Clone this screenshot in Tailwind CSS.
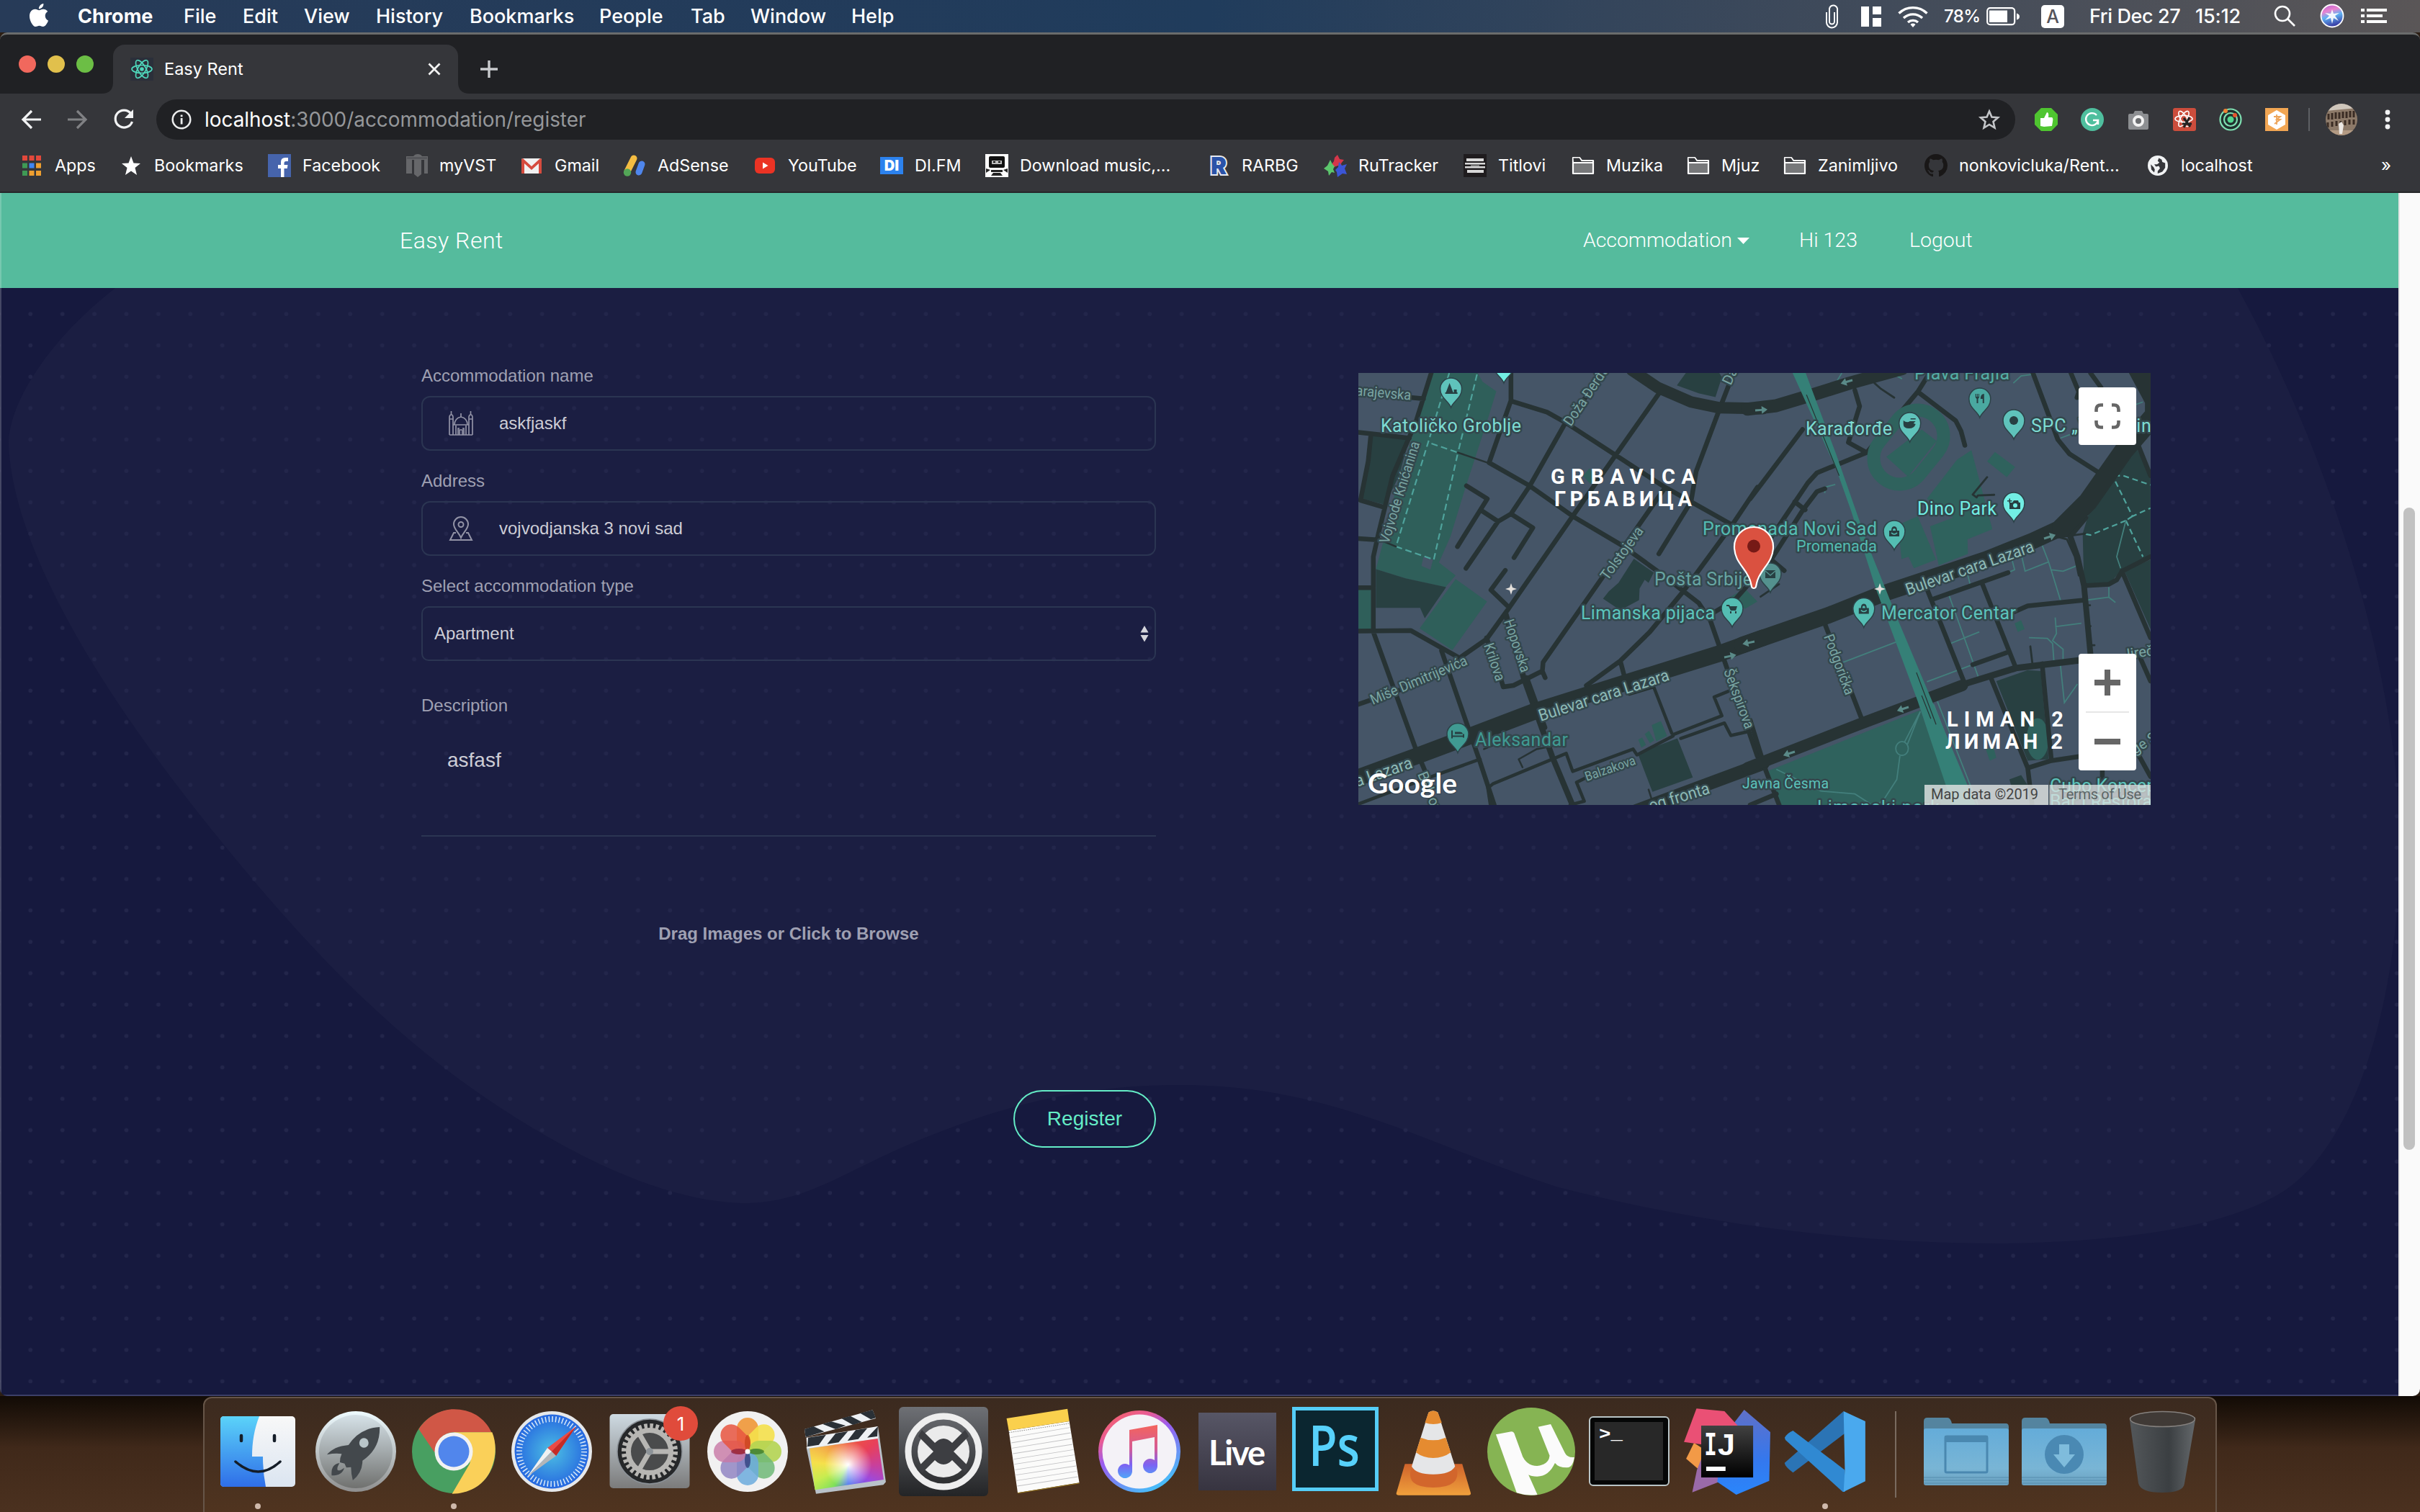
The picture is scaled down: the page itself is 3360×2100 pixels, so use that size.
<!DOCTYPE html>
<html lang="en">
<head>
<meta charset="utf-8">
<title>Easy Rent</title>
<script src="https://cdn.jsdelivr.net/npm/@tailwindcss/browser@4"></script>
</head>
<body class="w-[3360px] h-[2100px] overflow-hidden bg-[#2b1d13] font-[Inter,sans-serif] text-white">
<svg class="absolute w-0 h-0" aria-hidden="true">
  <defs>
    <symbol id="react" viewBox="0 0 32 32"><g fill="none" stroke="#4fd6bb" stroke-width="1.7"><ellipse cx="16" cy="16" rx="14" ry="5.5"/><ellipse cx="16" cy="16" rx="14" ry="5.5" transform="rotate(60 16 16)"/><ellipse cx="16" cy="16" rx="14" ry="5.5" transform="rotate(120 16 16)"/></g><circle cx="16" cy="16" r="2.8" fill="#4fd6bb"/></symbol>
    <symbol id="folder" viewBox="0 0 32 32"><path d="M2 5h9l3 4h16v18H2z" fill="#77787a" stroke="#fff" stroke-width="2.2" stroke-linejoin="round"/><path d="M2.5 5.500h8.200l3 4.500H29v2H3z" fill="#35363a"/><path d="M2 12h28" stroke="#fff" stroke-width="1.800"/></symbol>
    <pattern id="dots" x="20.300" y="414" width="44.400" height="43.600" patternUnits="userSpaceOnUse"><circle cx="22" cy="22" r="2.800" fill="#23264b"/></pattern>
  </defs>
</svg>
<div class="flex h-[2100px] w-[3360px] flex-col">

<!-- menu bar -->
<div class="flex h-[45px] shrink-0 items-center bg-linear-to-r from-[#273b58] via-[#203c5c] to-[#5a5657] text-[27px] font-medium leading-[42px]">
  <div class="flex w-[108px] justify-center"><svg class="h-[32px] w-[32px] -mt-[4px]" viewBox="0 0 24 24" fill="#fff"><path d="M12.152 6.896c-.948 0-2.415-1.078-3.960-1.040-2.040.027-3.910 1.183-4.961 3.014-2.117 3.675-.546 9.103 1.519 12.090 1.013 1.454 2.208 3.090 3.792 3.039 1.520-.065 2.090-.987 3.935-.987 1.831 0 2.350.987 3.960.948 1.637-.026 2.676-1.480 3.676-2.948 1.156-1.688 1.636-3.325 1.662-3.415-.039-.013-3.182-1.221-3.220-4.857-.026-3.040 2.480-4.494 2.597-4.559-1.429-2.090-3.623-2.324-4.390-2.376-2-.156-3.675 1.090-4.610 1.090zM15.530 3.830c.843-1.012 1.400-2.427 1.245-3.830-1.207.052-2.662.805-3.532 1.818-.780.896-1.454 2.338-1.273 3.714 1.338.104 2.715-.688 3.559-1.701"/></svg></div>
  <span class="w-[147px] font-bold">Chrome</span><span class="w-[82px]">File</span><span class="w-[86px]">Edit</span><span class="w-[100px] -ml-[1px]">View</span><span class="w-[130px]">History</span><span class="w-[180px]">Bookmarks</span><span class="w-[127px]">People</span><span class="w-[83px]">Tab</span><span class="w-[140px]">Window</span><span>Help</span>
  <div class="ml-auto flex w-[834px] items-center">
    <svg class="ml-[4px] h-[36px] w-[28px]" viewBox="0 0 28 36" fill="none" stroke="#fff" stroke-width="2"><path d="M6 12v14a7 7 0 0 0 15 0V9a5 5 0 0 0-11-2v18a3.500 3.500 0 0 0 7 0V12"/></svg>
    <svg class="ml-[26px] h-[30px] w-[28px]" viewBox="0 0 28 30" fill="#fff"><path d="M0 1h11v28H0zM16 1h12v11H16zM16 17h12v12H16z"/></svg>
    <svg class="ml-[23px] h-[32px] w-[42px]" viewBox="0 0 42 32" fill="none" stroke="#fff" stroke-width="3.400"><path d="M1.500 11.500a28 28 0 0 1 39 0M8 18a19 19 0 0 1 26 0M14 24a10.500 10.500 0 0 1 14 0"/><path d="M21 31l-3.500-4a5 5 0 0 1 7 0z" fill="#fff" stroke="none"/></svg>
    <span class="ml-[22px] w-[59px] text-[24px] tracking-tight">78%</span>
    <svg class="h-[26px] w-[47px]" viewBox="0 0 47 26"><rect x="1.200" y="1.200" width="38" height="23" rx="4" fill="none" stroke="#fff" stroke-width="2.200"/><rect x="4" y="4.500" width="25" height="16.500" fill="#fff"/><path d="M42 8.500q4 1 4 4.500t-4 4.500z" fill="#fff"/></svg>
    <span class="ml-[29px] flex h-[32px] w-[32px] items-center justify-center rounded-[5px] bg-white text-[25px] text-[#55545b]">A</span>
    <span class="ml-[35px] w-[147px] tracking-[-0.4px] whitespace-nowrap">Fri Dec 27</span><span class="tracking-[-0.2px]">15:12</span>
    <svg class="absolute left-[3156px] top-[6px] h-[32px] w-[32px]" viewBox="0 0 32 32" fill="none" stroke="#fff" stroke-width="2.600"><circle cx="13" cy="13" r="10"/><path d="M20.500 20.500L30 30"/></svg>
    <svg class="absolute left-[3221px] top-[5px] h-[34px] w-[34px]" viewBox="0 0 34 34"><defs><linearGradient id="siri" x1="0" y1="0" x2=".3" y2="1"><stop offset="0" stop-color="#b25ad0"/><stop offset=".35" stop-color="#e983d0"/><stop offset=".6" stop-color="#5fb2f3"/><stop offset="1" stop-color="#3b42a8"/></linearGradient></defs><circle cx="17" cy="17" r="15.500" fill="url(#siri)" stroke="#fff" stroke-width="1.800"/><path d="M17 8l2 6 8-1-6 4 5 7-7-4-2 8-2-8-8 3 6-6-6-4 8 1z" fill="#fff" opacity=".9"/></svg>
    <svg class="absolute left-[3278px] top-[11px] h-[22px] w-[36px]" viewBox="0 0 36 22" fill="#fff"><path d="M0 1h5v4H0zM0 9h5v4H0zM0 17h5v4H0zM8 1h28v4H8zM8 9h22v4H8zM8 17h28v4H8z"/></svg>
  </div>
</div>

<!-- browser window -->
<div class="relative flex h-[1894px] shrink-0 flex-col overflow-hidden rounded-[10px] border-t-[3px] border-[#6a6c6c] bg-[#202124]">
  <div class="flex h-[82px] shrink-0 items-end">
    <div class="mb-[29px] ml-[26px] flex gap-4"><i class="h-6 w-6 rounded-full bg-[#f1685d]"></i><i class="h-6 w-6 rounded-full bg-[#e1c04c]"></i><i class="h-6 w-6 rounded-full bg-[#6cbe45]"></i></div>
    <svg class="ml-[11px] h-[16px] w-[16px]" viewBox="0 0 16 16"><path d="M16 0v16H0Q16 16 16 0" fill="#35363a"/></svg>
    <div class="flex h-[68px] w-[479px] items-center rounded-t-[16px] bg-[#35363a] px-[24px]">
      <svg class="h-8 w-8 bg-[#2b2f3a]"><use href="#react"/></svg>
      <span class="ml-[15px] text-[23.5px] leading-[32px]">Easy Rent</span>
      <svg class="ml-auto h-[18px] w-[18px]" viewBox="0 0 18 18" stroke="#f2f2f2" stroke-width="2.800"><path d="M1.500 1.500l15 15M16.500 1.500l-15 15"/></svg>
    </div>
    <svg class="h-[16px] w-[16px]" viewBox="0 0 16 16"><path d="M0 0v16h16Q0 16 0 0" fill="#35363a"/></svg>
    <svg class="mb-[22px] ml-[15px] h-[24px] w-[24px]" viewBox="0 0 24 24" stroke="#c9cbce" stroke-width="3.400"><path d="M12 0v24M0 12h24"/></svg>
  </div>
  <!-- toolbar -->
  <div class="flex h-[72px] shrink-0 items-center bg-[#35363a]">
    <svg class="ml-[27px] h-[32px] w-[32px]" viewBox="0 0 32 32" fill="none" stroke="#f2f3f4" stroke-width="3.200"><path d="M30 16H5M17 4L5 16l12 12"/></svg>
    <svg class="ml-[33px] h-[32px] w-[32px]" viewBox="0 0 32 32" fill="none" stroke="#808184" stroke-width="3.200"><path d="M2 16h25M15 4l12 12-12 12"/></svg>
    <svg class="ml-[32px] h-[32px] w-[32px]" viewBox="0 0 32 32"><path d="M25.500 7.500A12 12 0 1 0 27.500 19" fill="none" stroke="#f2f3f4" stroke-width="3.200"/><path d="M29 2v12H17z" fill="#f2f3f4"/></svg>
    <div class="ml-[29px] flex h-[56px] w-[2581px] items-center rounded-full bg-[#202124]">
      <svg class="ml-[20px] h-[30px] w-[30px]" viewBox="0 0 30 30"><circle cx="15" cy="15" r="12.300" fill="none" stroke="#eceded" stroke-width="2.500"/><path d="M13.700 13h2.800v8.500h-2.800zM13.700 8.500h2.800v2.800h-2.800z" fill="#eceded"/></svg>
      <span class="ml-[17px] text-[27.9px] leading-[40px] text-white">localhost<span class="text-[#95979a]">:3000/accommodation/register</span></span>
      <svg class="ml-auto mr-[20px] h-[32px] w-[32px]" viewBox="0 0 32 32" fill="none" stroke="#c4c6c9" stroke-width="2.600"><path d="M16 4.500l3.400 8 8.600.8-6.500 5.700 2 8.500L16 23l-7.500 4.500 2-8.500L4 13.300l8.600-.8z"/></svg>
    </div>
    <svg class="ml-[27px] h-[32px] w-[32px]" viewBox="0 0 32 32"><path d="M9 0h14l9 9v14l-9 9H9l-9-9V9z" fill="#4fc530"/><path d="M8 14h5l4-8q3 0 2 7h5q2 1 1 6l-1 6-11 1-5-1z" fill="#fff"/></svg>
    <svg class="ml-[32px] h-[32px] w-[32px]" viewBox="0 0 32 32" fill="none" stroke="#fff" stroke-width="2.400"><circle cx="16" cy="16" r="16" fill="#4fbf9e" stroke="none"/><path d="M22 10a8.500 8.500 0 1 0 2 7h-7M24 17v6"/></svg>
    <svg class="ml-[32px] h-[32px] w-[32px]" viewBox="0 0 32 32"><path d="M11 4h10l2 4h5q2 0 2 2v18q0 2-2 2H4q-2 0-2-2V10q0-2 2-2h5z" fill="#8d8f92"/><circle cx="16" cy="18" r="6" fill="#6b6d70" stroke="#f2f2f2" stroke-width="4"/></svg>
    <svg class="ml-[32px] h-[32px] w-[32px]" viewBox="0 0 32 32" fill="none" stroke="#fff" stroke-width="1.600"><rect width="32" height="32" rx="3" fill="#cc4d3c" stroke="none"/><ellipse cx="15" cy="15" rx="12" ry="4.500"/><ellipse cx="15" cy="15" rx="12" ry="4.500" transform="rotate(60 15 15)"/><ellipse cx="15" cy="15" rx="12" ry="4.500" transform="rotate(120 15 15)"/><path d="M15 14l9 12M23 13l-8 14M13 22h13" stroke="#222" stroke-width="3"/></svg>
    <svg class="ml-[32px] h-[32px] w-[32px]" viewBox="0 0 32 32" fill="none" stroke="#7fe0b2" stroke-width="2.200"><circle cx="16" cy="16" r="14.500" fill="#20302e"/><circle cx="16" cy="16" r="9"/><circle cx="16" cy="16" r="4.500" fill="#52d68f" stroke="none"/><circle cx="9" cy="4" r="3" fill="#ef8233" stroke="none"/><circle cx="22" cy="10" r="3" fill="#e5542d" stroke="none"/></svg>
    <svg class="ml-[32px] h-[32px] w-[32px]" viewBox="0 0 32 32"><path d="M0 0h32v32H0z" fill="#f2a653"/><path d="M16 3l12 7v13l-12 7-12-7V10z" fill="#fff"/><path d="M12 12h9l-5 4h5l-8 6M16 9v14" stroke="#eda55b" stroke-width="1.800" fill="none"/></svg>
    <i class="ml-[28px] h-[32px] w-[2px] bg-[#5e6064]"></i>
    <svg class="ml-[22px] h-[44px] w-[44px] rounded-full" viewBox="0 0 44 44"><path d="M0 0h44v44H0z" fill="#8d7a69"/><path d="M0 0h44v6L0 10z" fill="#cfc6bb"/><path d="M4 14v8M9 13v9M14 12v9M19 12v9M24 11v9M29 11v9M34 10v9M39 10v9M3 26v7M9 25v7M15 24v7M21 24v7M27 23v7M33 22v7M39 22v7" stroke="#3a2c24" stroke-width="3"/><path d="M4 37h36v7H4z" fill="#b39a83"/><path d="M18 28l4-3 3 5-2 12h-4z" fill="#ece8e4"/></svg>
    <svg class="ml-[38px] h-[30px] w-[8px]" viewBox="0 0 8 30" fill="#f2f3f4"><circle cx="4" cy="5" r="3.400"/><circle cx="4" cy="15" r="3.400"/><circle cx="4" cy="25" r="3.400"/></svg>
  </div>
  <!-- bookmarks -->
  <div class="flex h-[66px] shrink-0 items-center border-b-2 border-[#26272a] bg-[#35363a] pb-[8px] pl-[28px] text-[23.3px] leading-[32px] whitespace-nowrap *:flex *:shrink-0 *:items-center">
    <div class="w-[138px] gap-[16px]"><svg class="h-8 w-8" viewBox="0 0 32 32"><path d="M3 2h7v7H3zM12.500 2h7v7h-7zM22 2h7v7h-7z" fill="#e2483b"/><path d="M3 12.500h7v7H3zM3 23h7v7H3z" fill="#3f9a55"/><path d="M12.500 12.500h7v7h-7z" fill="#3f86f5"/><path d="M22 12.500h7v7h-7zM12.500 23h7v7h-7zM22 23h7v7h-7z" fill="#ee9f30"/></svg>Apps</div>
    <div class="w-[206px] gap-[16px]"><svg class="h-8 w-8" viewBox="0 0 32 32" fill="#fff"><path d="M16 3l3.500 9.500L29 13l-7.500 6L24 29l-8-5.500L8 29l2.500-10L3 13l9.500-.5z"/></svg>Bookmarks</div>
    <div class="w-[191px] gap-[16px]"><svg class="h-8 w-8" viewBox="0 0 32 32"><path d="M0 0h32v32H0z" fill="#4664ac"/><path d="M18 32V20h-4v-5h4v-4q0-6 6-6h4v5h-3q-2.500 0-2.500 2.500V15h5l-.7 5h-4.300v12z" fill="#fff"/></svg>Facebook</div>
    <div class="w-[159px] gap-[15px]"><svg class="h-8 w-8" viewBox="0 0 32 32"><path d="M1 3h10q2-3 6-3t6 3h8v24h-5V8h-4v20l-5 4-5-4V8h-3v19H1z" fill="#66676a"/><path d="M2 4h28v3H2z" fill="#55565a"/></svg>myVST</div>
    <div class="w-[143px] gap-[16px]"><svg class="h-8 w-8" viewBox="0 0 32 32"><rect x="2" y="6" width="28" height="21" rx="2" fill="#f1f1f1"/><path d="M2 27V8q0-2 2-2l12 11L28 6q2 0 2 2v19h-4V13l-10 9-10-9v14z" fill="#d64b3e"/></svg>Gmail</div>
    <div class="w-[181px] gap-[16px]"><svg class="h-8 w-8" viewBox="0 0 32 32" stroke-width="9" stroke-linecap="round"><path d="M6 24L15 6" stroke="#f4bd42"/><path d="M22 25l4-11" stroke="#4f86ec"/><circle cx="6" cy="25.500" r="5.200" fill="#53a657"/></svg>AdSense</div>
    <div class="w-[176px] gap-[16px]"><svg class="h-8 w-8" viewBox="0 0 32 32"><rect x="2" y="5" width="28" height="22" rx="6" fill="#eb3324"/><path d="M13 11.500l7.500 4.500-7.500 4.500z" fill="#fff"/></svg>YouTube</div>
    <div class="w-[146px] gap-[16px]"><span class="flex h-[24px] w-8 items-center justify-center bg-[#2c82ee] text-[20px] leading-none font-black">DI</span>DI.FM</div>
    <div class="w-[308px] gap-[16px]"><svg class="h-8 w-8" viewBox="0 0 32 32"><path d="M0 0h32v32H0z" fill="#fff"/><rect x="5" y="3" width="22" height="16" rx="2" fill="#111"/><path d="M9 9h14v5H9z" fill="#bbb"/><path d="M11 10h3v2h-3zM18 10h3v2h-3z" fill="#111"/><path d="M1 20l6 2-6 4zM31 20l-6 2 6 4zM8 22h16v3H8zM8 30l3-4h10l3 4" fill="#222"/></svg>Download music,...</div>
    <div class="w-[162px] gap-[16px]"><span class="flex h-8 w-8 items-center justify-center text-[33px] leading-none font-black text-[#2b53a8] [-webkit-text-stroke:4px_#e8eaf0] [paint-order:stroke_fill]">R</span>RARBG</div>
    <div class="w-[194px] gap-[16px]"><svg class="h-8 w-8" viewBox="0 0 32 32"><path d="M19 1l3 6 6 1-4 5 1 5-5-2-6 2-3-4 3-4 1-5z" fill="#d4374a"/><path d="M9 8l3 6 3 3-2 4 2 5-4-1-4 5-1-6-6-4 5-4z" fill="#5cc66c"/><path d="M21 11l4 5 7-2-3 6 3 8-6-1-7 5-1-7-2-3 4-4z" fill="#3b55d6"/></svg>RuTracker</div>
    <div class="w-[150px] gap-[16px]"><svg class="h-8 w-8" viewBox="0 0 32 32"><path d="M0 0h32v32H0z" fill="#1f1c1e"/><path d="M4 6h24v4H4zM2 12h28v2.500H2zM2 17h28v2.500H2zM5 22h23v4H5z" fill="#d9d9d9"/><path d="M10 15h12v2H10z" fill="#777"/></svg>Titlovi</div>
    <div class="w-[160px] gap-[16px]"><svg class="h-8 w-8"><use href="#folder"/></svg>Muzika</div>
    <div class="w-[134px] gap-[16px]"><svg class="h-8 w-8"><use href="#folder"/></svg>Mjuz</div>
    <div class="w-[196px] gap-[16px]"><svg class="h-8 w-8"><use href="#folder"/></svg>Zanimljivo</div>
    <div class="w-[308px] gap-[16px]"><svg class="h-8 w-8" viewBox="0 0 16 16" fill="#191717"><path d="M8 0C3.580 0 0 3.580 0 8c0 3.540 2.290 6.530 5.470 7.590.4.070.55-.170.55-.380 0-.190-.010-.820-.010-1.490-2.010.370-2.530-.490-2.690-.940-.090-.230-.480-.940-.820-1.130-.280-.150-.680-.520-.010-.530.630-.010 1.080.580 1.230.820.720 1.210 1.870.870 2.330.660.070-.520.280-.870.510-1.070-1.780-.2-3.640-.890-3.640-3.950 0-.870.310-1.590.820-2.150-.080-.2-.360-1.020.080-2.120 0 0 .670-.210 2.200.820.640-.180 1.320-.270 2-.270.680 0 1.360.090 2 .270 1.530-1.040 2.200-.820 2.200-.820.440 1.100.160 1.920.080 2.120.510.560.820 1.270.820 2.150 0 3.070-1.870 3.750-3.650 3.950.290.250.540.730.540 1.480 0 1.070-.010 1.930-.010 2.200 0 .210.150.460.550.380A8.013 8.013 0 0016 8c0-4.420-3.580-8-8-8z"/></svg>nonkovicluka/Rent...</div>
    <div class="w-[326px] gap-[16px]"><svg class="h-8 w-8" viewBox="0 0 32 32"><circle cx="16" cy="16" r="14" fill="#f1f3f4"/><path d="M18 3l-2 5 3 3-4 3h-5l3 4 5-1 2 4-4 5v4l8-3 5-7v-8l-5-2-1-4zM4 14l5 5 2 4-1 5-5-5z" fill="#35363a" transform="translate(3 3) scale(.8)"/></svg>localhost</div>
    <span class="text-[24px]">»</span>
  </div>

  <!-- page -->
  <div class="flex min-h-0 flex-1">
    <div class="relative flex w-[3330px] flex-col bg-[#16193e]">
      <svg class="absolute left-0 top-0 h-[1671px] w-[3330px]" viewBox="0 268 3330 1671">
        <path d="M160 400C70 470 10 560 12 620C20 760 130 950 300 1160C470 1370 600 1490 780 1590C900 1655 980 1671 1040 1671C1130 1668 1180 1620 1300 1574C1400 1535 1500 1507 1640 1507C1850 1507 1980 1590 2160 1648C2400 1710 2620 1728 2787 1727C2950 1724 3090 1705 3170 1655C3270 1590 3332 1390 3332 1170C3332 980 3260 680 3107 400z" fill="#1b1e42"/>
        <rect y="400" width="3330" height="1539" fill="url(#dots)"/>
      </svg>
      <header class="relative flex h-[132px] items-center bg-[#55bb9d] pl-[555px] font-[Roboto,sans-serif] text-[28.500px] font-light">
        <a class="w-[1643px] text-[32px] leading-none tracking-[0.500px]">Easy Rent</a>
        <a class="flex w-[300px] items-center gap-[7px] tracking-[-0.100px]">Accommodation<svg class="h-[9px] w-[17px]" viewBox="0 0 17 9" fill="#fff"><path d="M0 0h17L8.500 9z"/></svg></a>
        <a class="w-[153px]">Hi 123</a><a>Logout</a>
      </header>
      <main class="relative flex pl-[585px] font-['Liberation_Sans',sans-serif]">
        <form class="flex w-[1020px] flex-col pt-[104px] text-[24px] leading-[36px] text-[#9fa0b2]">
          <label class="mb-[10px]">Accommodation name</label>
          <div class="mb-[24px] flex h-[76px] items-center rounded-[12px] border-2 border-[#2b3552] pl-[36px] text-[#cdcdd6]">
            <svg class="h-[34px] w-[34px]" viewBox="0 0 34 34" fill="none" stroke="#9293a6" stroke-width="1.700"><path d="M1 33V9q0-4 2.500-4T6 9v24M28 33V9q0-4 2.500-4T33 9v24M1 33h32M3.500 5V0M30.500 5V0M1 11h5M28 11h5M6 19h22M8 19q0-9 9-11 9 2 9 11M17 8V3M10 33V20M24 33V20M13 33v-9h2M21 33v-9h-2M15 33v-7h4v7"/></svg>
            <span class="ml-[36px]">askfjaskf</span>
          </div>
          <label class="mb-[10px]">Address</label>
          <div class="mb-[24px] flex h-[76px] items-center rounded-[12px] border-2 border-[#2b3552] pl-[36px] text-[#cdcdd6]">
            <svg class="h-[34px] w-[34px]" viewBox="0 0 34 34" fill="none" stroke="#9293a6" stroke-width="2"><path d="M17 30C14 22 7 18 7 11a10 10 0 0 1 20 0c0 7-7 11-10 19z"/><circle cx="17" cy="11.500" r="3.500"/><path d="M10 23H7L2 33h30l-5-10h-3"/></svg>
            <span class="ml-[36px]">vojvodjanska 3 novi sad</span>
          </div>
          <label class="mb-[10px]">Select accommodation type</label>
          <div class="flex h-[76px] items-center justify-between rounded-[10px] border-2 border-[#2b3552] pl-[16px] pr-[8px] text-[#cdcdd6]">Apartment<svg class="h-[24px] w-[12px]" viewBox="0 0 12 24" fill="#d5d5dc"><path d="M6 1l5.500 9.500H.5zM6 23.500L.5 14h11z"/></svg></div>
          <label class="mt-[44px]">Description</label>
          <div class="mt-[37px] h-[127px] border-b-2 border-[#2b3552] pl-[36px] text-[28px] leading-[42px] text-[#cdcdd6]">asfasf</div>
          <p class="mt-[117px] text-center font-bold">Drag Images or Click to Browse</p>
          <button class="mt-[199px] h-[80px] w-[198px] self-end rounded-full border-2 border-[#64ecc6] text-[28px] text-[#64ecc6]">Register</button>
        </form>
        <svg class="ml-[281px] mt-[118px] h-[600px] w-[1100px] overflow-hidden" viewBox="0 0 1100 600" font-family="Roboto, sans-serif">
          <rect width="1100" height="600" fill="#455567"/>
          <!-- west half -->
          <g transform="translate(-6 -18) scale(.35714 .40179)">
            <g fill="#2f5f5a">
              <path d="M300 45H480L500 75L553 108L525 190L430 450L375 610L330 700L395 745L355 785L200 755L85 723L110 640L170 420L225 270zM395 757L517 835L382 1003L255 928zM17 793H65L70 930L17 932zM1105 1312L1120 1305L1135 1330L1117 1340zM1130 1293L1147 1282L1167 1315L1150 1325zM1157 1262L1193 1248L1217 1300L1175 1318zM1440 830L1520 790L1568 835L1520 860zM890 400L915 375L940 400L920 430z"/>
            </g>
            <path fill="#455567" d="M270 680L307 690L297 725L262 712z"/>
            <path fill="#284041" d="M85 723L200 755L358 785L275 893L257 857H85zM65 262L215 270L175 400L120 500L25 478zM1290 45H1420L1430 60L1405 128L1340 115L1255 88zM1088 687L1165 735L1145 770L1130 760L1110 790L1108 830L1035 865L968 825L990 800L1028 770zM1103 1360L1257 1308L1317 1443L1160 1493z"/>
            <g fill="none" stroke="#4fa39c" stroke-width="2.200" stroke-dasharray="9 5"><path vector-effect="non-scaling-stroke" d="M370 45L288 285L163 645L310 690L404 320L288 285M478 50L404 320"/></g>
            <g fill="none" stroke="#273334" stroke-linejoin="round" stroke-linecap="round">
              <path vector-effect="non-scaling-stroke" stroke-width="6.500" d="M300 45L240 215L150 400L95 600L75 680V940L240 1345L285 1440M225 130L270 134M17 250L120 260L215 270M65 262L55 350L25 485L120 510M17 617L100 622M17 787H75M17 937L220 935L410 1030L515 965L600 860L850 540L1190 110M610 45V140L525 355L683 435L850 540L1040 640L1180 730L1340 840L1385 900L1440 1040L1568 1370M612 142L750 180L820 215L1010 325L1200 435L1310 490L1470 570M970 50L820 220L683 435L610 532L560 558L495 520M437 435L518 480L402 645M560 558L435 720M610 532L695 580L622 683M588 727L532 795L602 855M1210 440L1100 580L735 1045L732 1075L743 1098M732 1075L620 1125L580 1130L570 1100L515 960M1310 490L1185 670M1475 45L1425 160L1330 385L1310 490M1568 440L1470 570L1280 800L1150 940L1035 1040L903 1125M1035 1040L1053 1100M340 1005L490 1390L545 1538M17 1190L180 1140L430 1040M1385 880L1480 830L1568 740"/>
              <path vector-effect="non-scaling-stroke" stroke-width="4.500" d="M17 1535L270 1450L490 1380M530 1538L520 1480L540 1465L825 1360L850 1422L1085 1345L1100 1365L1240 1300M1235 1290L1165 1130L1070 1155L1053 1120M1240 1295L1430 1230L1400 1165L1455 1145M1270 1308L1440 1255L1465 1298L1530 1285M840 1538L895 1525L865 1460L900 1445"/>
              <path vector-effect="non-scaling-stroke" stroke-width="2.500" d="M404 320L525 357M100 622L163 645M505 1345L600 1310M710 1345L640 1380L655 1408M710 1345L770 1335M1145 1485L1165 1540"/>
              <path vector-effect="non-scaling-stroke" stroke-width="8" d="M590 880L660 1100L770 1370L850 1540M670 1100L740 1270"/>
              <path vector-effect="non-scaling-stroke" stroke-width="23" d="M-20 1455L270 1360L450 1300L700 1215L1040 1120L1420 1015L1590 960"/>
              <path vector-effect="non-scaling-stroke" stroke-width="16" d="M1080 35L1180 95L1310 145L1420 165L1590 168"/>
              <path vector-effect="non-scaling-stroke" stroke-width="18" d="M1060 1570L1590 1395"/>
            </g>
          </g>
          <!-- east half -->
          <g transform="translate(544 -18) scale(.36352 .40179)">
            <path fill="#2f625d" d="M655 240L712 280L603 403L520 335zM845 312L925 585L830 620L832 670L720 710L687 575L775 545L675 480L790 345zM565 570L640 540L710 690L625 720L605 680L578 688zM935 318L1012 370L980 405L905 350zM650 1210L790 1560H115L70 1420zM1010 910L1035 900L1048 930L1022 940zM900 1345L930 1340L940 1375L915 1385z"/>
            <path fill="#284041" d="M1470 295L1529 400V680L1415 730L1370 775L1275 778L1270 600L1300 510L1390 400zM1430 730L1529 690V930zM940 1110L1060 1072L1110 1075L1140 1380L1060 1385zM990 1450L1035 1435L1060 1470L1000 1480z"/>
            <ellipse cx="1098" cy="1310" rx="42" ry="72" fill="#2f625d"/>
            <g fill="none" stroke="#437f7c" stroke-width="1.800"><path vector-effect="non-scaling-stroke" d="M760 815L875 1105M765 980L875 940M675 1112L850 1053M355 1045L565 972M1115 640L1140 698L1185 830M1000 690L1010 725L985 735M1035 670L1050 730L1140 698M1150 725L1195 730L1245 712M830 740L840 775M1165 890L1170 945L1155 970L1195 1000V1035M1165 922L1265 910M1065 960L1135 962L1155 980L1160 1040M1185 1055L1200 1185L1250 1120M1285 830L1370 820L1395 838M1370 820V785M100 1415L270 1490L400 1500L460 1535M650 1215L590 1320M650 1215L600 1330M572 1368L560 1450L510 1520L480 1540M715 1180L870 1538M700 1190L850 1538M285 460V440L325 430M330 75L350 45M1005 80L1035 55L1075 50M1185 270L1230 255M1470 155L1500 145M560 55L580 65"/><circle vector-effect="non-scaling-stroke" cx="580" cy="1343" r="24"/><path vector-effect="non-scaling-stroke" stroke="#4fa39c" stroke-width="2.200" stroke-dasharray="8 5" d="M1390 400H1425L1529 432M1395 420L1460 540L1529 512M1435 555L1300 605L1270 600M1435 555L1500 680M1460 540L1435 555"/><path vector-effect="non-scaling-stroke" d="M1435 555L1400 680L1415 720"/></g>
            <g fill="none" stroke="#273334" stroke-linejoin="round" stroke-linecap="round">
              <path vector-effect="non-scaling-stroke" stroke-width="6.500" d="M400 105L418 160L375 285L445 320L640 110L685 45M640 110L785 210L805 245L820 295M445 320L255 390L220 425L75 620L-10 740M200 240L0 480M285 445L255 455L200 520L80 690L130 728M170 490L210 518M1080 45L1175 275L1220 325L1350 400M1225 45L1255 110L1248 130M1300 45L1340 95M1275 780L1370 775L1400 760L1420 730L1529 680M1420 730L1529 960M670 780L820 1120M695 828L985 735M885 770L1015 1065M1010 870L1060 850L1275 830M280 900L430 1250M920 1100L1060 1410L1080 1560M1115 1050L1150 1380M1060 1410L1150 1385L1260 1370M850 1053L985 1010M0 1245L60 1420L120 1560M1480 290L1529 400M1490 1030L1529 1110M1345 1420V1470M1480 1360L1529 1440M0 1538L100 1500"/>
              <path vector-effect="non-scaling-stroke" stroke-width="2.800" d="M475 80L500 100L550 130M905 405L850 465L865 475L870 468L932 466M1070 990L1078 1050M40 818L110 775M1285 848H1298M1290 920H1300M1300 986H1315M1170 610L1210 620L1240 680L1255 745M1160 615L1280 600"/>
              <path vector-effect="non-scaling-stroke" stroke-width="8" d="M1215 590L1250 680L1275 780L1300 1020M1280 545L1230 600"/>
              <path vector-effect="non-scaling-stroke" stroke-width="9" d="M800 1125L1015 1065L1260 1038"/>
              <path vector-effect="non-scaling-stroke" stroke-width="16" d="M-10 1410L420 1258L650 1180L810 1125"/>
              <path vector-effect="non-scaling-stroke" stroke-width="18" d="M-10 170L100 158L240 120L380 80L580 30"/>
              <path vector-effect="non-scaling-stroke" stroke-width="23" d="M-30 985L300 882L500 810L900 690L1080 625L1200 575"/>
              <path vector-effect="non-scaling-stroke" stroke-width="27" d="M1190 580L1290 490L1430 310L1545 190L1545 140L1480 30"/>
            </g>
            <path fill="#358077" d="M162 45H212L330 330L450 640L565 900L865 1545H775L640 1180L480 790L385 520L330 380z"/>
            <path fill="none" stroke="#273334" stroke-width="1.200" vector-effect="non-scaling-stroke" d="M215 120L340 400M635 1080L710 1260M655 1160L690 1240"/>
          </g>
          <rect x="-56" y="-36" width="112" height="72" rx="36" transform="translate(764 103) rotate(-51)" fill="none" stroke="#2f625d" stroke-width="18"/>
          <g fill="#5a8a88"><g transform="translate(508 395) rotate(-12)"><path id="arrow" d="M0-1.500h9v-4l8 5.500-8 5.500v-4H0z"/></g><use href="#arrow" transform="translate(550 373) rotate(168)"/><use href="#arrow" transform="translate(551 52) rotate(-4)"/><use href="#arrow" transform="translate(686 10) rotate(164)"/><use href="#arrow" transform="translate(952 230) rotate(-18)"/><use href="#arrow" transform="translate(764 464) rotate(162)"/><use href="#arrow" transform="translate(606 526) rotate(162)"/></g>
          <path fill="#e4e0dc" d="M212 292l2 6 6 2-6 2-2 6-2-6-6-2 6-2zM724 292l2 6 6 2-6 2-2 6-2-6-6-2 6-2z"/>
          <!-- street names -->
          <g fill="#7aa5a3" font-size="20" stroke="#33474d" stroke-width="5" stroke-linejoin="round" paint-order="stroke" lengthAdjust="spacingAndGlyphs">
            <text transform="translate(-4 31) rotate(5)" textLength="77" lengthAdjust="spacingAndGlyphs">arajevska</text>
            <text transform="translate(42 238) rotate(-72.800)" textLength="147" lengthAdjust="spacingAndGlyphs">Vojvode Knićanina</text>
            <text transform="translate(295 75) rotate(-56)" textLength="96" lengthAdjust="spacingAndGlyphs">Doža Đerđa</text>
            <text transform="translate(517 18) rotate(-65)">Da</text>
            <text transform="translate(346 289) rotate(-54)" textLength="86" lengthAdjust="spacingAndGlyphs">Tolstojeva</text>
            <text transform="translate(202 345) rotate(71.400)" textLength="76" lengthAdjust="spacingAndGlyphs">Hopovska</text>
            <text transform="translate(174 378) rotate(71.400)" textLength="54" lengthAdjust="spacingAndGlyphs">Krilova</text>
            <text transform="translate(20 461) rotate(-23)" textLength="144" lengthAdjust="spacingAndGlyphs">Miše Dimitrijevića</text>
            <text transform="translate(317 567) rotate(-19)" font-size="18" textLength="73" lengthAdjust="spacingAndGlyphs">Balzakova</text>
            <text transform="translate(507 414) rotate(69.500)" textLength="87" lengthAdjust="spacingAndGlyphs">Šekspirova</text>
            <text transform="translate(646 366) rotate(69.600)" textLength="88" lengthAdjust="spacingAndGlyphs">Podgorička</text>
            <text transform="translate(82 557) rotate(68)" xml:space="preserve">Bal  ov</text>
            <text transform="translate(1062 398) rotate(-8)">Jireček</text>
            <text transform="translate(1078 530) rotate(-32)">ge S</text>
            <g font-size="23" fill="#8dbab6">
            <text transform="translate(253 484) rotate(-17.800)" textLength="189" lengthAdjust="spacingAndGlyphs">Bulevar cara Lazara</text>
            <text transform="translate(763 309) rotate(-19.200)" textLength="187" lengthAdjust="spacingAndGlyphs">Bulevar cara Lazara</text>
            <text transform="translate(-2 575) rotate(-19)" textLength="83" lengthAdjust="spacingAndGlyphs">a Lazara</text>
            <text transform="translate(406 609) rotate(-17)" textLength="87" lengthAdjust="spacingAndGlyphs">og fronta</text>
            </g>
          </g>
          <!-- places -->
          <g fill="#5cc4bc" font-size="25" stroke="#33474d" stroke-width="5" stroke-linejoin="round" paint-order="stroke">
            <text x="31" y="82" textLength="195" fill="#7ddcd3">Katoličko Groblje</text>
            <text x="478" y="224.500" textLength="242" fill="#54bdb3">Promenada Novi Sad</text>
            <text x="608" y="247.500" textLength="112" font-size="22" fill="#54bdb3">Promenada</text>
            <text x="411" y="295" textLength="136" fill="#67a5a3">Pošta Srbije</text>
            <text x="309" y="342" textLength="186">Limanska pijaca</text>
            <text x="162" y="518" textLength="129" fill="#409a92">Aleksandar</text>
            <text x="533" y="577" textLength="120" font-size="19.500">Javna Česma</text>
            <text x="772" y="9" textLength="132" fill="#54aea6">Plava Frajla</text>
            <text x="621" y="85.500" textLength="120" fill="#7ddcd3">Karađorđe</text>
            <text x="934" y="81.500" textLength="190" fill="#7ddcd3">SPC „Vojvodina“</text>
            <text x="776" y="196.500" textLength="110" fill="#72eee4">Dino Park</text>
            <text x="726" y="342" textLength="187">Mercator Centar</text>
            <text x="637" y="612" textLength="170">Limanski park</text>
            <text x="960" y="581.500">Cubo Koncept</text>
            <text x="960" y="604">Bar I Restoran</text>
          </g>
          <g fill="#fff" font-size="29" font-weight="700">
            <text x="267" y="153.500" textLength="201">GRBAVICA</text><text x="272" y="185" textLength="191">ГРБАВИЦА</text>
            <text x="817" y="490.500" textLength="162">LIMAN 2</text><text x="815" y="521.500" textLength="163">ЛИМАН 2</text>
          </g>
          <!-- markers -->
          <g fill="#5fc3bb">
            <g transform="translate(128.600 22)"><path id="p" d="M0 26C-3 17-15 13-15 0A15 15 0 0 1 15 0C15 13 3 17 0 26z" stroke="#2c4248" stroke-width="1.500"/><path d="M-7 5L-2-8l5 13zM-8 5H9v2H-8zM4 1h4v4H4z" fill="#273f42"/></g>
            <use href="#p" x="202" y="-12" fill="#72eee4"/>
            <g transform="translate(519 327)" fill="#54bdb3"><use href="#p"/><path d="M-8-5h4l1 2h10L5 3h-7L-5-3h-3zM-3 4h2v3h-2zM4 4h2v3H4z" fill="#273f42"/></g>
            <g transform="translate(138 501.500)" fill="#409a92"><use href="#p"/><path d="M-9-5h2v7H7v-1q0-4-4-4h-7v3H9v5H7V4H-7v2h-2z" fill="#273f42"/></g>
            <g transform="translate(765.700 70)"><use href="#p"/><path d="M-9-4q5 4 9 1h8l-3 3 3 1q-2 6-9 6-8 0-8-6zM1-7h7v1.500H1z" fill="#273f42"/></g>
            <g transform="translate(862.800 36)" fill="#4aa9a1"><use href="#p"/><path d="M-6-7h1.200v4h1V-7h1v4h1V-7h1v5l-1.500 2v6h-2v-6L-6-2zM6-7v13H4V0H1q0-7 5-7z" fill="#273f42"/></g>
            <g transform="translate(910 66)"><use href="#p"/><circle r="6" fill="#273f42"/></g>
            <g transform="translate(910 181)" fill="#72eee4"><use href="#p"/><path d="M-6-1h4l2-3h6l1 3h2v9H-6zM-9-4h2.500v-2.500H-5V-4h2.500v1.500H-5V0h-1.500v-2.500H-9z" fill="#273f42"/><circle cx="2" cy="3" r="3" /></g>
            <g transform="translate(744 220)" fill="#54bdb3"><use href="#p"/><path d="M-7-1h3q0-6 4-6t4 6h3v8H-7zM-2-1h4q0-3-2-3t-2 3z" fill="#273f42"/><path d="M-4 2q4 4 8 0" fill="none" stroke="#54bdb3" stroke-width="1.500"/></g>
            <g transform="translate(701.800 327.500)" fill="#54bdb3"><use href="#p"/><path d="M-7-1h3q0-6 4-6t4 6h3v8H-7zM-2-1h4q0-3-2-3t-2 3z" fill="#273f42"/><path d="M-4 2q4 4 8 0" fill="none" stroke="#54bdb3" stroke-width="1.500"/></g>
            <g transform="translate(572 279)" fill="#54918e"><use href="#p"/><path d="M-7-5H7V6H-7z" fill="#273f42"/><path d="M-7-4L0 2l7-6" fill="none" stroke="#54918e" stroke-width="1.500"/></g>
          </g>
          <path d="M549 299c-3 0-3-2-4-7-4-20-23-27-23-51a27 27 0 0 1 54 0c0 24-19 31-23 51-1 5-1 7-4 7z" fill="#da5140" stroke="#fff" stroke-width="2.200"/><circle cx="549" cy="240.500" r="9" fill="#761a16"/>
          <!-- controls -->
          <rect x="786" y="572" width="172" height="28" fill="#e1e4e3" opacity=".82"/><rect x="959.500" y="572" width="141" height="28" fill="#e1e4e3" opacity=".75"/>
          <g font-size="20" fill="#444"><text x="795" y="592" textLength="149">Map data ©2019</text><text x="972" y="592" textLength="115" fill="#5c6667">Terms of Use</text></g>
          <text x="13" y="584" textLength="124" font-family="Lato, sans-serif" font-weight="700" font-size="39" fill="#fff" stroke="#2d3a46" stroke-opacity=".35" stroke-width="3" paint-order="stroke">Google</text>
          <rect x="1000" y="20" width="80" height="80" rx="4" fill="#fff"/>
          <path d="M1024.500 54v-3q0-6.500 6.500-6.500h3M1046 44.500h3q6.500 0 6.500 6.500v3M1055.500 66v3q0 6.500-6.500 6.500h-3M1034 75.500h-3q-6.500 0-6.500-6.500v-3" fill="none" stroke="#666" stroke-width="4.600"/>
          <rect x="1000" y="390" width="80" height="162" rx="4" fill="#fff"/>
          <path d="M1010 471h60" stroke="#e6e6e6" stroke-width="2"/><path d="M1022 430h36M1040 412v36M1022 512h36" stroke="#666" stroke-width="8"/>
        </svg>
      </main>
      <i class="absolute left-0 top-0 h-full w-[2px] bg-white/20"></i><i class="absolute bottom-0 left-0 h-[2px] w-full bg-[#3c3f68]"></i>
    </div>
    <div class="w-[30px] border-l-2 border-[#e4e4e4] bg-[#fafafa] pl-[5px] pt-[437px]"><div class="h-[892px] w-[16px] rounded-full bg-[#c1c1c1]"></div></div>
  </div>
</div>

<!-- desktop and dock -->
<div class="flex h-[161px] shrink-0 justify-between bg-linear-to-b from-[#120b06] via-[#40291a] via-45% to-[#4b311f] pt-px">
  <div class="ml-[282px] flex h-[165px] w-[2796px] rounded-t-[12px] border-2 border-[#665548] bg-linear-to-b from-[#3b2a1f] to-[#50341f] pl-[6px] *:-mt-[2px] *:h-[160px] *:w-[136px] *:shrink-0">
    <svg viewBox="0 0 136 160"><defs><linearGradient id="f1" x1="0" y1="0" x2="0" y2="1"><stop offset="0" stop-color="#5bd3f9"/><stop offset="1" stop-color="#2f6ee8"/></linearGradient><linearGradient id="f2" x1="0" y1="0" x2="0" y2="1"><stop offset="0" stop-color="#f8f8f8"/><stop offset="1" stop-color="#dbe5f1"/></linearGradient></defs><rect x="16" y="27" width="104" height="98" rx="5" fill="url(#f2)"/><path d="M21 27h49c-7 18-10 36-10 56h15q0 22 4 42H21q-5 0-5-5V32q0-5 5-5z" fill="url(#f1)"/><g fill="none" stroke="#141d28" stroke-linecap="round"><path d="M45 54v7M91 54v7" stroke-width="4.500"/><path d="M37 90q32 28 62 0" stroke-width="3.500"/></g><circle cx="68" cy="152" r="4" fill="#cfb9ab"/></svg>
    <svg viewBox="0 0 136 160"><defs><linearGradient id="l1" x1="0" y1="0" x2="0" y2="1"><stop offset="0" stop-color="#d6e2e8"/><stop offset="1" stop-color="#70716f"/></linearGradient><linearGradient id="l2" x1="0" y1="0" x2="0" y2="1"><stop offset="0" stop-color="#eefbff"/><stop offset="1" stop-color="#8f8f8f"/></linearGradient></defs><circle cx="68" cy="76" r="56" fill="url(#l2)"/><circle cx="68" cy="76" r="51" fill="url(#l1)"/><g transform="translate(-156 -10) scale(.4974 .3333)"><path d="M517 156q2 90-48 140 0 50-27 82-5-30-5-55l-13 2-5-17-13-5q0-20 5-35-18-4-41 3 18-34 60-40 30-70 87-75z" fill="#43484c"/><path d="M405 306q-25 5-22 52 30 0 35-32-12 14-18 10-4-8 5-30" fill="#43484c"/><ellipse cx="473" cy="222" rx="13" ry="20" fill="#b9c5c9"/></g></svg>
    <svg viewBox="0 0 136 160"><circle cx="68" cy="76" r="58" fill="#489f61"/><g transform="translate(-292 -10) scale(.4974 .3333)"><path d="M626 165C650 110 690 82 724 82C770 82 810 115 829 178H724Q680 180 670 262z" fill="#d05746"/><path d="M724 178H831C845 230 842 290 824 345C805 400 765 434 719 434L768 310Q785 230 724 178z" fill="#fad059"/></g><circle cx="68" cy="76" r="26.500" fill="#f2f2f2"/><circle cx="68" cy="76" r="21.500" fill="#5186ec"/><circle cx="68" cy="152" r="4" fill="#cfb9ab"/></svg>
    <svg viewBox="0 0 136 160"><defs><radialGradient id="s1"><stop offset="0" stop-color="#4cbfe3"/><stop offset="1" stop-color="#2668e0"/></radialGradient></defs><circle cx="68" cy="76" r="56" fill="#e6e8ea"/><circle cx="68" cy="76" r="51.500" fill="url(#s1)"/><circle cx="68" cy="76" r="45" fill="none" stroke="#dbeaf8" stroke-width="8" stroke-dasharray="1.500 3.212"/><path d="M102 41L62 71l6 5 6 6z" fill="#ea4b45"/><path d="M102 41L68 76l6 6z" fill="#c42a26"/><path d="M34 111L62 71l6 5z" fill="#f1f1f1"/><path d="M34 111L74 82l-6-6z" fill="#b3b6b9"/></svg>
    <svg viewBox="0 0 136 160"><defs><linearGradient id="g1" x1="0" y1="0" x2="0" y2="1"><stop offset="0" stop-color="#cedae2"/><stop offset="1" stop-color="#7b7b7b"/></linearGradient></defs><rect x="12.500" y="24" width="111" height="103" rx="5" fill="url(#g1)"/><circle cx="68" cy="76" r="45" fill="#26282a" stroke="#8c9298" stroke-width="1.500"/><circle cx="68" cy="76" r="35.500" fill="none" stroke="#b7b6b3" stroke-width="7" stroke-dasharray="4.500 3.470"/><circle cx="68" cy="76" r="29.500" fill="#4a4b4c" stroke="#b7b6b3" stroke-width="7"/><path d="M68 76h28M68 76L54 52M68 76l-14 24" stroke="#b7b6b3" stroke-width="7"/><circle cx="68" cy="76" r="5" fill="#8d9398"/><circle cx="111" cy="37" r="24" fill="#e04b3b"/><text x="111" y="46.500" text-anchor="middle" font-family="Inter, sans-serif" font-size="26" fill="#fff">1</text></svg>
    <svg viewBox="0 0 136 160"><circle cx="68" cy="76" r="56" fill="#f1f1f1"/><g><rect x="53" y="29" width="30" height="46" rx="15" fill="#f0a04a"/><rect x="53" y="29" width="30" height="46" rx="15" fill="#f4e04b" opacity=".9" transform="rotate(45 68 76)"/><rect x="53" y="29" width="30" height="46" rx="15" fill="#b4d452" opacity=".9" transform="rotate(90 68 76)"/><rect x="53" y="29" width="30" height="46" rx="15" fill="#6fb878" opacity=".85" transform="rotate(135 68 76)"/><rect x="53" y="29" width="30" height="46" rx="15" fill="#6cabdd" opacity=".85" transform="rotate(180 68 76)"/><rect x="53" y="29" width="30" height="46" rx="15" fill="#8c7fc0" opacity=".8" transform="rotate(225 68 76)"/><rect x="53" y="29" width="30" height="46" rx="15" fill="#c878a5" opacity=".8" transform="rotate(270 68 76)"/><rect x="53" y="29" width="30" height="46" rx="15" fill="#e75540" opacity=".85" transform="rotate(315 68 76)"/></g><g opacity=".75"><ellipse cx="68" cy="64" rx="4" ry="11" fill="#c9401c"/><ellipse cx="68" cy="64" rx="4" ry="11" fill="#3e7a22" transform="rotate(90 68 76)"/><ellipse cx="68" cy="64" rx="4" ry="11" fill="#2c3f7c" transform="rotate(180 68 76)"/><ellipse cx="68" cy="64" rx="4" ry="11" fill="#8b1f3c" transform="rotate(270 68 76)"/></g><circle cx="68" cy="76" r="3.500" fill="#fff"/></svg>
    <svg viewBox="0 0 136 160"><g transform="translate(-76 -10) scale(.4974 .3333)"><path d="M180 240L380 153L402 385L395 397L207 434z" fill="#b9c2c9"/><path d="M180 200L380 153V205L182 245z" fill="#eef1f4"/><path d="M185 200L235 188L215 230L183 238zM262 182L296 174L270 220L238 227zM318 168L350 161L325 206L295 213zM380 153L378 195L350 200z" fill="#2a3036"/><path d="M175 165L365 85L374 120L178 198z" fill="#eef1f4"/><path d="M175 165L200 153L230 175L178 198zM225 143L250 133L290 150L262 165zM278 120L303 110L335 135L310 147zM330 98L365 85L374 118L360 124z" fill="#2a3036"/></g><foreignObject x="17" y="58" width="105" height="72"><div class="h-[72px] w-[105px] bg-[radial-gradient(circle_at_52%_50%,#fff_0,#ffffffb0_14%,#fff0_50%),conic-gradient(from_0deg_at_52%_52%,#ee5a3c,#e8405a_50deg,#c8409c_90deg,#9a4ae0_125deg,#3f6cf0_180deg,#7fe05a_215deg,#c8ec50_245deg,#f6e04b_275deg,#f2a048_315deg,#ee5a3c)] [clip-path:polygon(1%_19%,91%_0,99%_79%,8%_99%)]"></div></foreignObject></svg>
    <svg viewBox="0 0 136 160"><defs><linearGradient id="t1" x1="0" y1="0" x2="0" y2="1"><stop offset="0" stop-color="#6e7075"/><stop offset="1" stop-color="#232426"/></linearGradient></defs><rect x="6" y="14" width="124" height="124" rx="6" fill="url(#t1)"/><circle cx="68" cy="76" r="49" fill="none" stroke="#eeeeee" stroke-width="9"/><circle cx="68" cy="76" r="36" fill="#ebebeb"/><path d="M38 46l18 18q12-12 24 0l18-18q3 4 5 9L82 76l21 21q-2 5-5 9L80 88q-12 12-24 0l-18 18q-3-4-5-9l21-21-21-21q2-5 5-9z" fill="#3d3e42"/></svg>
    <svg viewBox="0 0 136 160"><g transform="translate(-347 -10) scale(.4974 .3333)"><path d="M743 170L912 132L940 388L768 430z" fill="#fbfbfa"/><path d="M737 120L907 80L912 132L743 170z" fill="#fad04d"/><path d="M748 200L914 158M750 222L916 180M752 244L919 204M755 267L921 228M757 290L924 250M759 311L926 272M761 334L928 295M763 356L931 318M765 379L933 340M767 402L936 363" stroke="#c2c2c4" stroke-width="2.500"/><path d="M744 179L912 141" stroke="#888" stroke-width="3" stroke-dasharray="3 3"/><path d="M768 431L940 390" stroke="#9a7a20" stroke-width="3"/></g></svg>
    <svg viewBox="0 0 136 160"><defs><linearGradient id="i1" x1="0" y1="0" x2=".6" y2="1"><stop offset="0" stop-color="#fb6657"/><stop offset=".3" stop-color="#e85b96"/><stop offset=".5" stop-color="#9a5cf0"/><stop offset="1" stop-color="#48bbf8"/></linearGradient><linearGradient id="i2" x1="0" y1="0" x2="0" y2="1"><stop offset="0" stop-color="#f4645c"/><stop offset=".45" stop-color="#d45b96"/><stop offset=".75" stop-color="#7c62f3"/><stop offset="1" stop-color="#4fa6f8"/></linearGradient></defs><circle cx="68" cy="76" r="57" fill="url(#i1)"/><circle cx="68" cy="76" r="51.500" fill="#f4f2f7"/><path d="M54 46L93 39v58a10 10 0 1 1-4-9V56L58 62v42a10 10 0 1 1-4-9z" fill="url(#i2)"/></svg>
    <svg viewBox="0 0 136 160"><defs><linearGradient id="v1" x1="0" y1="0" x2="0" y2="1"><stop offset="0" stop-color="#575666"/><stop offset="1" stop-color="#373440"/></linearGradient></defs><rect x="14" y="22" width="108" height="108" fill="url(#v1)"/><text x="28" y="95" textLength="79" font-family="Lato, sans-serif" font-weight="700" font-size="47" fill="#fff">Live</text></svg>
    <svg viewBox="0 0 136 160"><rect x="10.500" y="16.500" width="115" height="112" fill="#0b2630" stroke="#55cdf7" stroke-width="5"/><text x="31" y="96" textLength="71" lengthAdjust="spacingAndGlyphs" font-family="Open Sans, sans-serif" font-weight="600" font-size="77" fill="#57d1fb">Ps</text></svg>
    <svg viewBox="0 0 136 160"><defs><linearGradient id="w1" x1="0" y1="0" x2="0" y2="1"><stop offset="0" stop-color="#cf632b"/><stop offset="1" stop-color="#f0a03c"/></linearGradient></defs><g transform="translate(-142 -10) scale(.4974 .3333)"><path d="M343 310H503L527 432Q527 440 520 440H326Q319 440 319 432z" fill="url(#w1)"/><path d="M360 330Q345 408 422 408Q500 408 488 330z" fill="#d2662c"/><path d="M409 95Q422 82 435 95L483 320Q470 353 422 353Q374 353 362 320z" fill="#e5e6e8"/><path d="M409 95Q422 82 435 95L446 138Q422 150 399 138zM387 200Q422 222 457 200L471 262Q450 285 422 285Q394 285 374 262z" fill="#e58b30"/></g></svg>
    <svg viewBox="0 0 136 160"><circle cx="68" cy="76" r="61" fill="#86b453"/><g transform="translate(-278 -10) scale(.4974 .3333)"><path d="M597 187L640 175Q648 175 650 190L672 280Q685 318 712 318Q745 312 747 275L715 155L750 144L790 265Q797 285 816 282Q812 325 795 325Q770 325 762 305Q745 362 712 362Q695 362 688 355L713 438Q683 444 655 430z" fill="#fbfbfb"/></g></svg>
    <svg viewBox="0 0 136 160"><rect x="13" y="28" width="110" height="95" rx="5" fill="#050606" stroke="#b9c4c6" stroke-width="2"/><rect x="20" y="35" width="95" height="81" fill="#282828"/><text x="26" y="59" font-family="Liberation Mono, monospace" font-weight="700" font-size="24" textLength="33" lengthAdjust="spacingAndGlyphs" fill="#fff">&gt;_</text></svg>
    <svg viewBox="0 0 136 160"><defs><linearGradient id="j1" x1="0" y1="0" x2="0" y2="1"><stop offset="0" stop-color="#6070c8"/><stop offset=".6" stop-color="#3478ee"/><stop offset="1" stop-color="#2a86fb"/></linearGradient><linearGradient id="j2" x1="0" y1="0" x2="0" y2="1"><stop offset="0" stop-color="#414141"/><stop offset="1" stop-color="#000"/></linearGradient></defs><g transform="translate(-550 -10) scale(.4974 .3333)"><path d="M1150 222L1128 288L1165 335L1230 300z" fill="#f29a47"/><path d="M1158 335L1145 428L1245 370L1230 290L1170 290z" fill="#9a6aa8"/><path d="M1290 84L1363 177L1360 380L1268 438L1215 385L1230 200z" fill="url(#j1)"/><path d="M1157 79L1235 90L1272 150L1180 230L1122 218z" fill="#ea5075"/><path d="M1170 150H1315V366H1170z" fill="url(#j2)"/><path d="M1184 321H1238V339H1184z" fill="#fff"/></g><g font-weight="700" fill="#fff"><text x="36.500" y="80.500" textLength="17" lengthAdjust="spacingAndGlyphs" font-family="Liberation Mono, monospace" font-size="46">I</text><text x="55" y="80.500" font-family="Liberation Sans, sans-serif" font-size="43">J</text></g></svg>
    <svg viewBox="0 0 136 160"><g transform="translate(-16 -40) scale(.5804 .3333)"><path d="M189 180L48 395Q48 410 68 436L192 272z" fill="#2b74b5"/><path d="M48 290Q55 270 68 261L192 425V516H187L50 300z" fill="#3089d2"/><path d="M189 180L241 222V472L189 516L192 425z" fill="#4aa9ee"/></g><circle cx="68" cy="152" r="4" fill="#cfb9ab"/></svg>
    <div class="flex justify-center pt-[20px] !w-[60px]"><i class="h-[120px] w-[2px] bg-[#7a6b5f]"></i></div>
    <svg viewBox="0 0 136 160"><defs><linearGradient id="d1" x1="0" y1="0" x2="0" y2="1"><stop offset="0" stop-color="#64acd9"/><stop offset=".7" stop-color="#79b5d5"/><stop offset="1" stop-color="#6aa0bf"/></linearGradient></defs><g id="fold"><path d="M9 34q0-5 5-5h28q4 0 6 8h75q4 0 4 5v20H9z" fill="#54849f"/><path d="M9 47q0-3 3-3h112q3 0 3 3v73q0 3-3 3H12q-3 0-3-3z" fill="url(#d1)"/><path d="M9 112h118M9 116h118M9 120h118" stroke="#568dad" stroke-width="1.200"/></g><rect x="39" y="55" width="58" height="50" rx="2" fill="none" stroke="#4a88b0" stroke-width="3"/><path d="M38 54h60v9H38z" fill="#4a88b0"/></svg>
    <svg viewBox="0 0 136 160"><use href="#fold"/><circle cx="68" cy="80" r="27" fill="#4a89b3"/><path d="M61 66h14v14h8L68 98 53 80h8z" fill="#7fbcdc"/></svg>
    <svg viewBox="0 0 136 160"><defs><linearGradient id="b1"><stop offset="0" stop-color="#53575a"/><stop offset=".6" stop-color="#3b3f42"/><stop offset="1" stop-color="#64686b"/></linearGradient></defs><path d="M23 32l12 88q3 13 33 13t31-13l15-88z" fill="url(#b1)"/><ellipse cx="68.500" cy="31" rx="45" ry="10.500" fill="#403a36" stroke="#85817e" stroke-width="1.500"/></svg>
  </div>
</div>
</div>
</body>
</html>
